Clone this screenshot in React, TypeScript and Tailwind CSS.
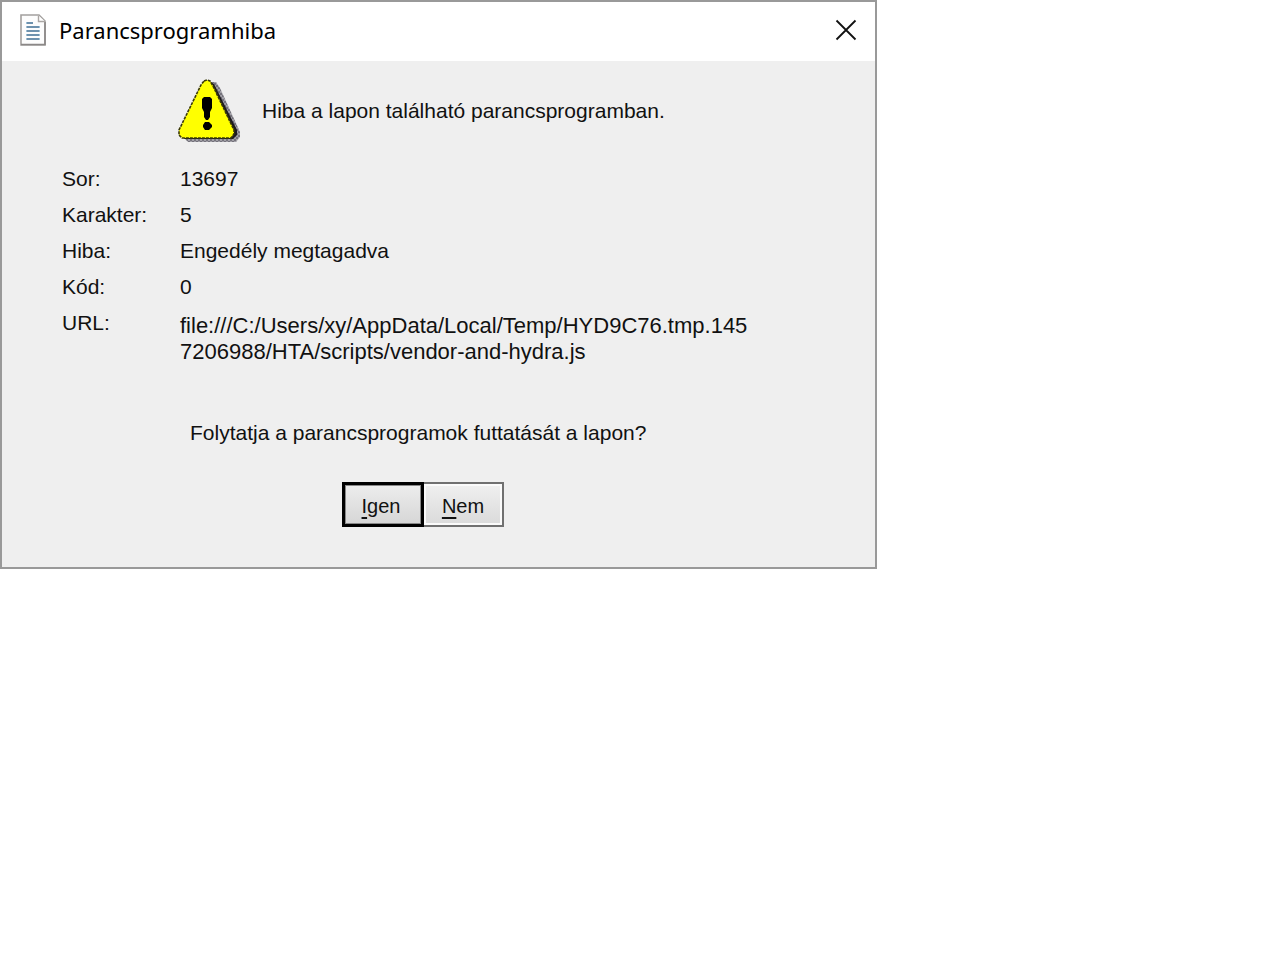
import React, { useState } from 'react';

const DETAILS = [
  { label: 'Sor:', value: '13697' },
  { label: 'Karakter:', value: '5' },
  { label: 'Hiba:', value: 'Engedély megtagadva' },
  { label: 'Kód:', value: '0' }
];

const DocumentIcon = () => (
  <svg width="27" height="32" viewBox="0 0 27 32" fill="none" aria-hidden="true">
    <path d="M1 1H19L25 7V31H1Z" fill="#fdfdfd" stroke="#a3a09e" strokeWidth="1.6" />
    <path d="M1 30.5H25V8" stroke="#8b8887" strokeWidth="1.6" />
    <path d="M18.5 1.5V7.5H25" fill="#fff" stroke="#aaa6a4" strokeWidth="1.4" />
    <path d="M6 9H13M6 13H20M6 17H20M6 21H20M6 25H20" stroke="#9fc0d6" strokeWidth="2" />
    <path d="M7 9H13M7 13H19M7 17H19M7 21H19M7 25H19" stroke="#3f6585" strokeWidth="1.2" />
  </svg>
);

const WarningIcon = () => (
  <svg width="64" height="64" viewBox="0 0 64 64" aria-hidden="true">
    <defs>
      <pattern id="shadow-dots" width="4" height="4" patternUnits="userSpaceOnUse">
        <rect width="4" height="4" fill="#a19fa6" />
        <path d="M0 0H2V2H0ZM2 2H4V4H2Z" fill="#75737c" />
      </pattern>
    </defs>
    <path d="M34 3H38L42 9L62 53V58L58 63H10L7 60L30 8Z" fill="url(#shadow-dots)" />
    <path d="M31 2L36 5L59 51V56L55 60H6Z" fill="#1c1a20" />
    <path
      d="M26 2L29 1L32 2L35 7L56 51V55L53 59H4L1 56V51L23 6Z"
      fill="#ffff00"
      stroke="#3a3908"
      strokeWidth="1.6"
      strokeDasharray="3 1"
    />
    <path d="M26 18H32L34 20V29L32 33V38L30 41H28L26 38V33L24 29V20Z" fill="#000" />
    <path d="M27 43H31L34 46V48L31 51H27L25 48V46Z" fill="#000" />
  </svg>
);

const CloseIcon = () => (
  <svg width="22" height="22" viewBox="0 0 22 22" fill="none" aria-hidden="true">
    <path d="M1.5 1.5L20.5 20.5M20.5 1.5L1.5 20.5" stroke="#111" strokeWidth="1.8" />
  </svg>
);

const App: React.FC = () => {
  const [isOpen, setIsOpen] = useState(true);

  const handleClose = () => setIsOpen(false);

  if (!isOpen) {
    return null;
  }

  return (
    <div className="min-h-screen bg-white font-['Liberation_Sans',Arial,sans-serif] text-[21px] leading-8 text-[#111]">
      <div
        role="dialog"
        aria-labelledby="dialog-title"
        className="w-full max-w-[877px] border-2 border-[#999] bg-[#efefef]"
      >
        <header className="flex h-[59px] items-center bg-white px-[18px] pb-1">
          <DocumentIcon />
          <h1 id="dialog-title" className="ml-3 grow font-['Noto_Sans','Open_Sans',sans-serif] text-[22px] text-black">
            Parancsprogramhiba
          </h1>
          <button type="button" aria-label="Bezárás" onClick={handleClose}>
            <CloseIcon />
          </button>
        </header>

        <main className="px-[60px] pb-10">
          <div className="ml-[116px] flex items-center gap-5 pt-[18px]">
            <WarningIcon />
            <p>Hiba a lapon található parancsprogramban.</p>
          </div>

          <dl className="mt-[18px] grid grid-cols-[118px_1fr] leading-9">
            {DETAILS.map(item => (
              <React.Fragment key={item.label}>
                <dt>{item.label}</dt>
                <dd>{item.value}</dd>
              </React.Fragment>
            ))}
            <dt>URL:</dt>
            <dd className="pt-2 text-[22px] leading-[26px]">
              file:///C:/Users/xy/AppData/Local/Temp/HYD9C76.tmp.145
              <br />
              7206988/HTA/scripts/vendor-and-hydra.js
            </dd>
          </dl>

          <p className="mt-[52px] ml-32">Folytatja a parancsprogramok futtatását a lapon?</p>

          <div className="mt-[33px] ml-[280px] flex text-[20px]">
            <button
              type="button"
              onClick={handleClose}
              className="h-[45px] w-[82px] border-3 border-black bg-linear-to-b from-[#ededed] to-[#d6d6d6] pt-0.5 pr-1 inset-ring inset-ring-[#888]"
            >
              <span className="underline underline-offset-4">I</span>gen
            </button>
            <button
              type="button"
              onClick={handleClose}
              className="h-[45px] w-[80px] border-2 border-l-0 border-[#707070] bg-linear-to-b from-[#f0f0f0] to-[#dadada] pt-0.5 inset-ring-2 inset-ring-[#fafafa]"
            >
              <span className="underline underline-offset-4">N</span>em
            </button>
          </div>
        </main>
      </div>
    </div>
  );
};

export default App;
